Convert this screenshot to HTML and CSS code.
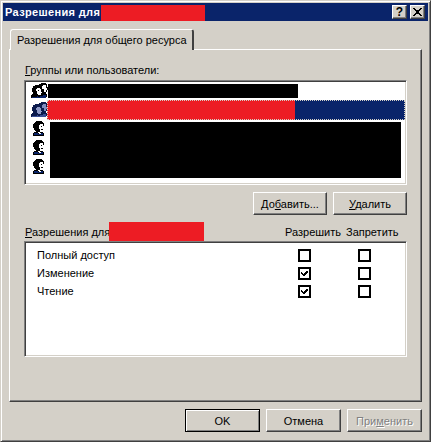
FILE: index.html
```html
<!DOCTYPE html>
<html lang="ru">
<head>
<meta charset="utf-8">
<title>Разрешения</title>
<link rel="stylesheet" href="styles.css">
</head>
<body>
<svg class="defs" width="0" height="0" aria-hidden="true">
  <symbol id="user" viewBox="0 0 12 15">
    <path d="M3 0h6v1h1v1h1v3h-1V3H7v1H6v4h1v2H5v1H3v-1H2V9H1V7H0V3h1V2h1V1h1z" fill="#000"/>
    <path d="M7 3h3v2h1v2h-1v2H9v1H7V8H6V4h1z" fill="#fff"/>
    <path d="M8 5h1v1H8zM8 8h2v1H8z" fill="#000"/>
    <path d="M0 12h1v-1h4v-1h2v1h3v1h1v3H0z" fill="#000"/>
    <path d="M1 12h4v1h2v-1h3v2H1z" fill="#0a246a"/>
    <path d="M5 11h2v1h1v1H6v-1H5z" fill="#fff"/>
  </symbol>
  <symbol id="group" viewBox="0 0 17 16">
    <path d="M8 1h2V0h5v1h1v3h1v3h-1v2h-1v2h1v3H1v1H0v-3h1v-1h1V9H1V5h1V3h2V2h4z" fill="#000"/>
    <path d="M12 2h3v3h1v2h-1v2h-2V6h-2V3h1z" fill="#fff"/>
    <path d="M6 5h3v1h1v3h1v1h-1v2H7v-1H6V8H5V6h1z" fill="#fff"/>
    <path d="M7 7h1v1H7z" fill="#000"/>
    <path d="M1 14h5v-1h1v1h2v-1h3v-1h3v3H1z" fill="#0a246a"/>
  </symbol>
  <symbol id="group-selected" viewBox="0 0 17 16">
    <path d="M8 1h2V0h5v1h1v3h1v3h-1v2h-1v2h1v3H1v1H0v-3h1v-1h1V9H1V5h1V3h2V2h4z" fill="#0b1a4c"/>
    <path d="M12 2h3v3h1v2h-1v2h-2V6h-2V3h1z" fill="#7f8bbd"/>
    <path d="M6 5h3v1h1v3h1v1h-1v2H7v-1H6V8H5V6h1z" fill="#8e99c6"/>
    <path d="M1 14h5v-1h1v1h2v-1h3v-1h3v3H1z" fill="#3a4f95"/>
  </symbol>
</svg>
<main class="window">
  <header class="titlebar">
    <span class="title">Разрешения для</span>
    <span class="redact redact-title"></span>
    <span class="title-spacer"></span>
    <button class="cap-btn" type="button">?</button>
    <button class="cap-btn cap-close" type="button" aria-label="Закрыть">
      <svg class="pixel" width="9" height="8" viewBox="0 0 9 8"><path d="M0 0h2v1h1v1h3V1h1V0h2v1H8v1H7v1H6v2h1v1h1v1h1v1H7V7H6V6H3v1H2v1H0V7h1V6h1V5h1V3H2V2H1V1H0z" fill="#000"/></svg>
    </button>
  </header>

  <div class="tabs"><div class="tab">Разрешения для общего ресурса</div></div>

  <section class="panel">
    <div class="label"><u>Г</u>руппы или пользователи:</div>
    <div class="list users">
      <div class="user-row">
        <svg class="pixel icon-group"><use href="#group"/></svg>
        <span class="redact-first"></span>
      </div>
      <div class="user-row">
        <svg class="pixel icon-group"><use href="#group-selected"/></svg>
        <span class="selection"><span class="redact redact-selected"></span></span>
      </div>
      <div class="user-row"><svg class="pixel icon-user"><use href="#user"/></svg></div>
      <div class="user-row"><svg class="pixel icon-user"><use href="#user"/></svg></div>
      <div class="user-row"><svg class="pixel icon-user"><use href="#user"/></svg></div>
      <div class="redact-block"></div>
    </div>

    <div class="list-actions">
      <button class="btn" type="button">До<u>б</u>авить...</button>
      <button class="btn" type="button"><u>У</u>далить</button>
    </div>

    <div class="perm-head">
      <span class="perm-name"><u>Р</u>азрешения для</span>
      <span class="redact redact-head"></span>
      <span class="perm-spacer"></span>
      <span class="perm-col">Разрешить</span>
      <span class="perm-col">Запретить</span>
    </div>
    <div class="list perms">
      <div class="perm-row"><span>Полный доступ</span><i class="check"></i><i class="check"></i></div>
      <div class="perm-row"><span>Изменение</span>
        <i class="check"><svg class="pixel" width="9" height="9" viewBox="0 0 9 9"><path d="M1 3h1v1h1v1h1V4h1V3h1V2h2v2H7v1H6v1H5v1H3V6H2V5H1z" fill="#000"/></svg></i><i class="check"></i></div>
      <div class="perm-row"><span>Чтение</span>
        <i class="check"><svg class="pixel" width="9" height="9" viewBox="0 0 9 9"><path d="M1 3h1v1h1v1h1V4h1V3h1V2h2v2H7v1H6v1H5v1H3V6H2V5H1z" fill="#000"/></svg></i><i class="check"></i></div>
    </div>
  </section>

  <footer class="dialog-actions">
    <button class="btn btn-wide btn-default" type="button">OK</button>
    <button class="btn btn-wide" type="button">Отмена</button>
    <button class="btn btn-wide btn-disabled" type="button">При<u>м</u>енить</button>
  </footer>
</main>
</body>
</html>
```

FILE: styles.css
```css
* { box-sizing: border-box; }

html, body {
  margin: 0;
  padding: 0;
}

body {
  width: 431px;
  height: 442px;
  overflow: hidden;
  font-family: "Liberation Sans", Arial, sans-serif;
  font-size: 11px;
  color: #000;
  background: #d4d0c8;
}

.defs { display: block; height: 0; }
.pixel { shape-rendering: crispEdges; display: block; }

.window {
  width: 431px;
  height: 442px;
  display: flex;
  flex-direction: column;
  padding: 2px;
  border: 1px solid;
  border-color: #d4d0c8 #404040 #404040 #d4d0c8;
  box-shadow: inset 1px 1px 0 #fff, inset -1px -1px 0 #808080;
  background: #d4d0c8;
}

.titlebar {
  height: 18px;
  flex: none;
  display: flex;
  align-items: flex-start;
  background: #0a246a;
  padding-right: 3px;
}

.title {
  color: #fff;
  font-weight: bold;
  letter-spacing: 0.35px;
  line-height: 18px;
  padding-left: 2px;
  width: 98px;
  white-space: nowrap;
  overflow: hidden;
}

.title-spacer { flex: 1; }

.redact { display: block; background: #ed1c24; flex: none; }
.redact-title { width: 104px; height: 16px; margin-top: 2px; }

.cap-btn {
  width: 15px;
  height: 14px;
  margin-top: 2px;
  padding: 0;
  border: 1px solid;
  border-color: #fff #404040 #404040 #fff;
  box-shadow: inset -1px -1px 0 #808080;
  background: #d4d0c8;
  display: flex;
  align-items: center;
  justify-content: center;
  font: bold 12px/12px "Liberation Sans", Arial, sans-serif;
  color: #000;
}

.cap-close { margin-left: 3px; }

.tabs {
  flex: none;
  margin: 8px 0 0 7px;
  height: 20px;
  position: relative;
  z-index: 1;
}

.tab {
  width: 184px;
  height: 21px;
  padding: 3px 0 0 6px;
  line-height: 15px;
  white-space: nowrap;
  background: #d4d0c8;
  border: solid;
  border-width: 1px 2px 0 1px;
  border-color: #fff #404040 #d4d0c8 #fff;
  border-top-left-radius: 3px;
  border-top-right-radius: 3px;
}

.panel {
  width: 413px;
  height: 353px;
  flex: none;
  margin-left: 6px;
  padding: 13px 14px 0 14px;
  border: 1px solid;
  border-color: #fff #404040 #404040 #fff;
  box-shadow: inset -1px -1px 0 #808080;
}

.label {
  height: 17px;
  line-height: 14px;
  padding-left: 1px;
}

.list {
  position: relative;
  width: 383px;
  background: #fff;
  border: 1px solid;
  border-color: #808080 #fff #fff #808080;
  box-shadow: inset 1px 1px 0 #404040, inset -1px -1px 0 #d4d0c8;
}

.users {
  height: 105px;
}

.user-row {
  height: 19px;
  display: flex;
  align-items: center;
  padding-left: 6px;
}

.icon-group { width: 17px; height: 16px; flex: none; }
.icon-user { width: 12px; height: 15px; flex: none; margin-left: 2px; }

.redact-first { display: block; background: #000; width: 250px; height: 14px; }

.selection {
  flex: 1;
  align-self: flex-start;
  height: 20px;
  margin-left: -1px;
  margin-right: 1px;
  background: #0a246a;
  outline: 1px dotted #d4d0c8;
  outline-offset: -1px;
}

.redact-selected { width: 248px; height: 20px; }

.redact-block {
  position: absolute;
  left: 25px;
  top: 41px;
  width: 351px;
  height: 56px;
  background: #000;
}

.list-actions {
  display: flex;
  justify-content: flex-end;
  gap: 6px;
  margin-top: 7px;
}

.btn {
  width: 74px;
  height: 23px;
  padding: 0;
  background: #d4d0c8;
  border: 1px solid;
  border-color: #fff #404040 #404040 #fff;
  box-shadow: inset -1px -1px 0 #808080;
  font: 11px/14px "Liberation Sans", Arial, sans-serif;
  color: #000;
  text-align: center;
}

.perm-head {
  display: flex;
  align-items: flex-end;
  height: 19px;
  margin-top: 7px;
  padding-left: 1px;
}

.perm-name { width: 84px; white-space: nowrap; line-height: 16px; padding-bottom: 1px; }
.redact-head { width: 95px; height: 19px; }
.perm-spacer { flex: 1; }
.perm-col { width: 61px; line-height: 16px; padding-bottom: 1px; white-space: nowrap; }

.perms {
  height: 116px;
  padding-top: 7px;
}

.perm-row {
  display: grid;
  grid-template-columns: 226px 13px 13px;
  column-gap: 47px;
  height: 18px;
  align-items: start;
  line-height: 13px;
}

.perm-row span { padding-left: 12px; }

.check {
  display: flex;
  align-items: center;
  justify-content: center;
  width: 13px;
  height: 13px;
  border: 2px solid #000;
  background: #fff;
}

.dialog-actions {
  flex: none;
  display: flex;
  justify-content: flex-end;
  gap: 6px;
  margin-top: 7px;
  padding-right: 6px;
}

.btn-wide { width: 75px; }

.btn-default {
  border-color: #000;
  box-shadow: inset 1px 1px 0 #fff, inset -1px -1px 0 #808080;
}

.btn-disabled {
  color: #808080;
  text-shadow: 1px 1px 0 #fff;
}
```
